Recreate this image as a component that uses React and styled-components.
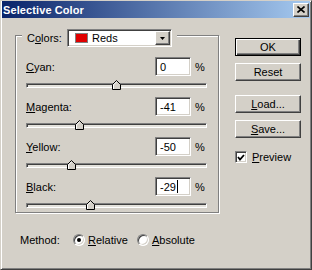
import React from "react";
import styled, { createGlobalStyle } from "styled-components";

const GlobalStyle = createGlobalStyle`
  html, body { margin: 0; padding: 0; background: #d4d0c8; }
  body {
    font-family: "Liberation Sans", Arial, sans-serif;
    font-size: 11px;
    color: #000;
  }
  * { box-sizing: border-box; }
`;

const Window = styled.div`
  width: 312px;
  height: 270px;
  background: #d4d0c8;
  border: 1px solid;
  border-color: #d4d0c8 #404040 #404040 #d4d0c8;
  box-shadow: inset 1px 1px #fff, inset -1px -1px #808080;
  padding: 0 1px 1px 1px;
  display: flex;
  flex-direction: column;
`;

const TitleBar = styled.div`
  height: 17px;
  display: flex;
  align-items: center;
  padding: 0 1px 0 1px;
  background: linear-gradient(to right, #0a246a, #a6caf0);
`;

const Title = styled.div`
  flex: 1;
  color: #fff;
  font-weight: bold;
  font-size: 11px;
  letter-spacing: 0.1px;
`;

const raised = `
  background: #d4d0c8;
  border: 1px solid;
  border-color: #fff #404040 #404040 #fff;
  box-shadow: inset -1px -1px #808080;
`;

const sunken = `
  background: #fff;
  border: 1px solid;
  border-color: #808080 #fff #fff #808080;
  box-shadow: inset 1px 1px #404040, inset -1px -1px #d4d0c8;
`;

const CloseButton = styled.div`
  ${raised}
  width: 16px;
  height: 14px;
  display: flex;
  align-items: center;
  justify-content: center;
`;

const Body = styled.div`
  flex: 1;
  display: flex;
  padding-left: 13px;
`;

const LeftColumn = styled.div`
  width: 204px;
  padding-top: 17px;
`;

const GroupBox = styled.div`
  border: 1px solid #808080;
  box-shadow: inset 1px 1px #fff, 1px 1px #fff;
  padding: 0 10px 2px 10px;
`;

const GroupHeader = styled.div`
  margin-top: -7px;
  margin-left: -4px;
  display: flex;
  align-items: center;
  align-self: flex-start;
  width: max-content;
  height: 18px;
  padding: 0 5px;
  background: #d4d0c8;
`;

const HeaderLabel = styled.span`
  width: 40px;
`;

const Combo = styled.div`
  ${sunken}
  width: 105px;
  height: 18px;
  display: flex;
  align-items: center;
  padding-left: 7px;
`;

const Swatch = styled.span`
  width: 13px;
  height: 10px;
  background: ${(p) => p.$color};
  border: 1px solid #808080;
`;

const ComboText = styled.span`
  margin-left: 4px;
`;

const DropButton = styled.div`
  ${raised}
  margin-left: auto;
  margin-right: 1px;
  width: 15px;
  height: 14px;
  display: flex;
  align-items: center;
  justify-content: center;
`;

const Row = styled.div`
  margin-top: ${(p) => (p.$first ? 10 : 7)}px;
`;

const RowTop = styled.div`
  display: flex;
  align-items: center;
  height: 19px;
`;

const RowLabel = styled.span`
  flex: 1;
`;

const Field = styled.div`
  ${sunken}
  width: 36px;
  height: 19px;
  display: flex;
  align-items: center;
  padding-left: 4px;
`;

const Caret = styled.span`
  width: 1px;
  height: 13px;
  margin-left: 1px;
  background: #000;
`;

const Percent = styled.span`
  width: 13px;
  margin-left: 4px;
`;

const Slider = styled.div`
  position: relative;
  margin-top: 4px;
  width: 181px;
  height: 10px;
  padding-top: 3px;
`;

const Channel = styled.div`
  height: 5px;
  border: 1px solid;
  border-color: #808080 #fff #fff #808080;
  box-shadow: inset 1px 1px #404040;
  background: #e4e2dc;
`;

const Thumb = styled.svg`
  position: absolute;
  top: 0;
  width: 9px;
  height: 10px;
`;

const MethodRow = styled.div`
  margin-top: 20px;
  height: 14px;
  display: flex;
  align-items: center;
  padding-left: 5px;
`;

const MethodLabel = styled.span`
  width: 53px;
`;

const RadioOption = styled.label`
  display: flex;
  align-items: center;
  width: ${(p) => p.$width}px;
`;

const Radio = styled.span`
  width: 12px;
  height: 12px;
  border-radius: 50%;
  background: #fff;
  border: 1px solid;
  border-color: #808080 #fff #fff #808080;
  box-shadow: inset 1px 1px #404040, inset -1px -1px #d4d0c8;
  display: flex;
  align-items: center;
  justify-content: center;
  margin-right: 3px;
  &::after {
    content: "";
    width: 4px;
    height: 4px;
    border-radius: 50%;
    background: ${(p) => (p.$checked ? "#000" : "transparent")};
  }
`;

const RightColumn = styled.div`
  margin-left: 16px;
  padding-top: 20px;
  display: flex;
  flex-direction: column;
`;

const Button = styled.div`
  width: 66px;
  height: 18px;
  margin-top: ${(p) => p.$gap || 0}px;
  display: flex;
  align-items: center;
  justify-content: center;
  background: #d4d0c8;
  border: 1px solid;
  border-color: ${(p) => (p.$default ? "#000" : "#fff #404040 #404040 #fff")};
  box-shadow: ${(p) =>
    p.$default
      ? "inset 1px 1px #fff, inset -1px -1px #404040, inset -2px -2px #808080"
      : "inset -1px -1px #808080"};
`;

const CheckRow = styled.label`
  margin-top: 13px;
  display: flex;
  align-items: center;
`;

const CheckBox = styled.span`
  ${sunken}
  width: 12px;
  height: 12px;
  display: flex;
  align-items: center;
  justify-content: center;
  margin-right: 5px;
`;

const rows = [
  { key: "c", label: "yan", lead: "C", value: 0 },
  { key: "m", label: "agenta", lead: "M", value: -41 },
  { key: "y", label: "ellow", lead: "Y", value: -50 },
  { key: "b", label: "lack", lead: "B", value: -29, caret: true },
];

const SliderRow = ({ row, first }) => {
  const left = ((row.value + 100) / 200) * 181 - 4.5;
  return (
    <Row $first={first}>
      <RowTop>
        <RowLabel>
          <u>{row.lead}</u>
          {row.label}:
        </RowLabel>
        <Field>
          {row.value}
          {row.caret && <Caret />}
        </Field>
        <Percent>%</Percent>
      </RowTop>
      <Slider>
        <Channel />
        <Thumb viewBox="0 0 9 10" style={{ left }}>
          <polygon points="0.5,4.5 4.5,0.5 8.5,4.5 8.5,9.5 0.5,9.5" fill="#d4d0c8" stroke="#000" />
          <polyline points="1.5,9 1.5,4.9 4.5,1.9" fill="none" stroke="#fff" />
        </Thumb>
      </Slider>
    </Row>
  );
};

export default function App() {
  return (
    <>
      <GlobalStyle />
      <Window>
        <TitleBar>
          <Title>Selective Color</Title>
          <CloseButton>
            <svg width="8" height="7" viewBox="0 0 8 7">
              <path d="M0.5 0.5 L7.5 6.5 M7.5 0.5 L0.5 6.5" stroke="#000" strokeWidth="1.6" />
            </svg>
          </CloseButton>
        </TitleBar>
        <Body>
          <LeftColumn>
            <GroupBox>
              <GroupHeader>
                <HeaderLabel>
                  C<u>o</u>lors:
                </HeaderLabel>
                <Combo>
                  <Swatch $color="#e00000" />
                  <ComboText>Reds</ComboText>
                  <DropButton>
                    <svg width="5" height="3" viewBox="0 0 5 3">
                      <polygon points="0,0 5,0 2.5,3" fill="#000" />
                    </svg>
                  </DropButton>
                </Combo>
              </GroupHeader>
              {rows.map((r, i) => (
                <SliderRow key={r.key} row={r} first={i === 0} />
              ))}
            </GroupBox>
            <MethodRow>
              <MethodLabel>Method:</MethodLabel>
              <RadioOption $width={64}>
                <Radio $checked />
                <span>
                  <u>R</u>elative
                </span>
              </RadioOption>
              <RadioOption $width={60}>
                <Radio />
                <span>
                  <u>A</u>bsolute
                </span>
              </RadioOption>
            </MethodRow>
          </LeftColumn>
          <RightColumn>
            <Button $default>OK</Button>
            <Button $gap={7}>Reset</Button>
            <Button $gap={14}>
              <span>
                <u>L</u>oad...
              </span>
            </Button>
            <Button $gap={7}>
              <span>
                <u>S</u>ave...
              </span>
            </Button>
            <CheckRow>
              <CheckBox>
                <svg width="8" height="7" viewBox="0 0 8 7">
                  <polyline points="1,3 3,5.5 7,1" fill="none" stroke="#000" strokeWidth="1.8" />
                </svg>
              </CheckBox>
              <span>
                <u>P</u>review
              </span>
            </CheckRow>
          </RightColumn>
        </Body>
      </Window>
    </>
  );
}
